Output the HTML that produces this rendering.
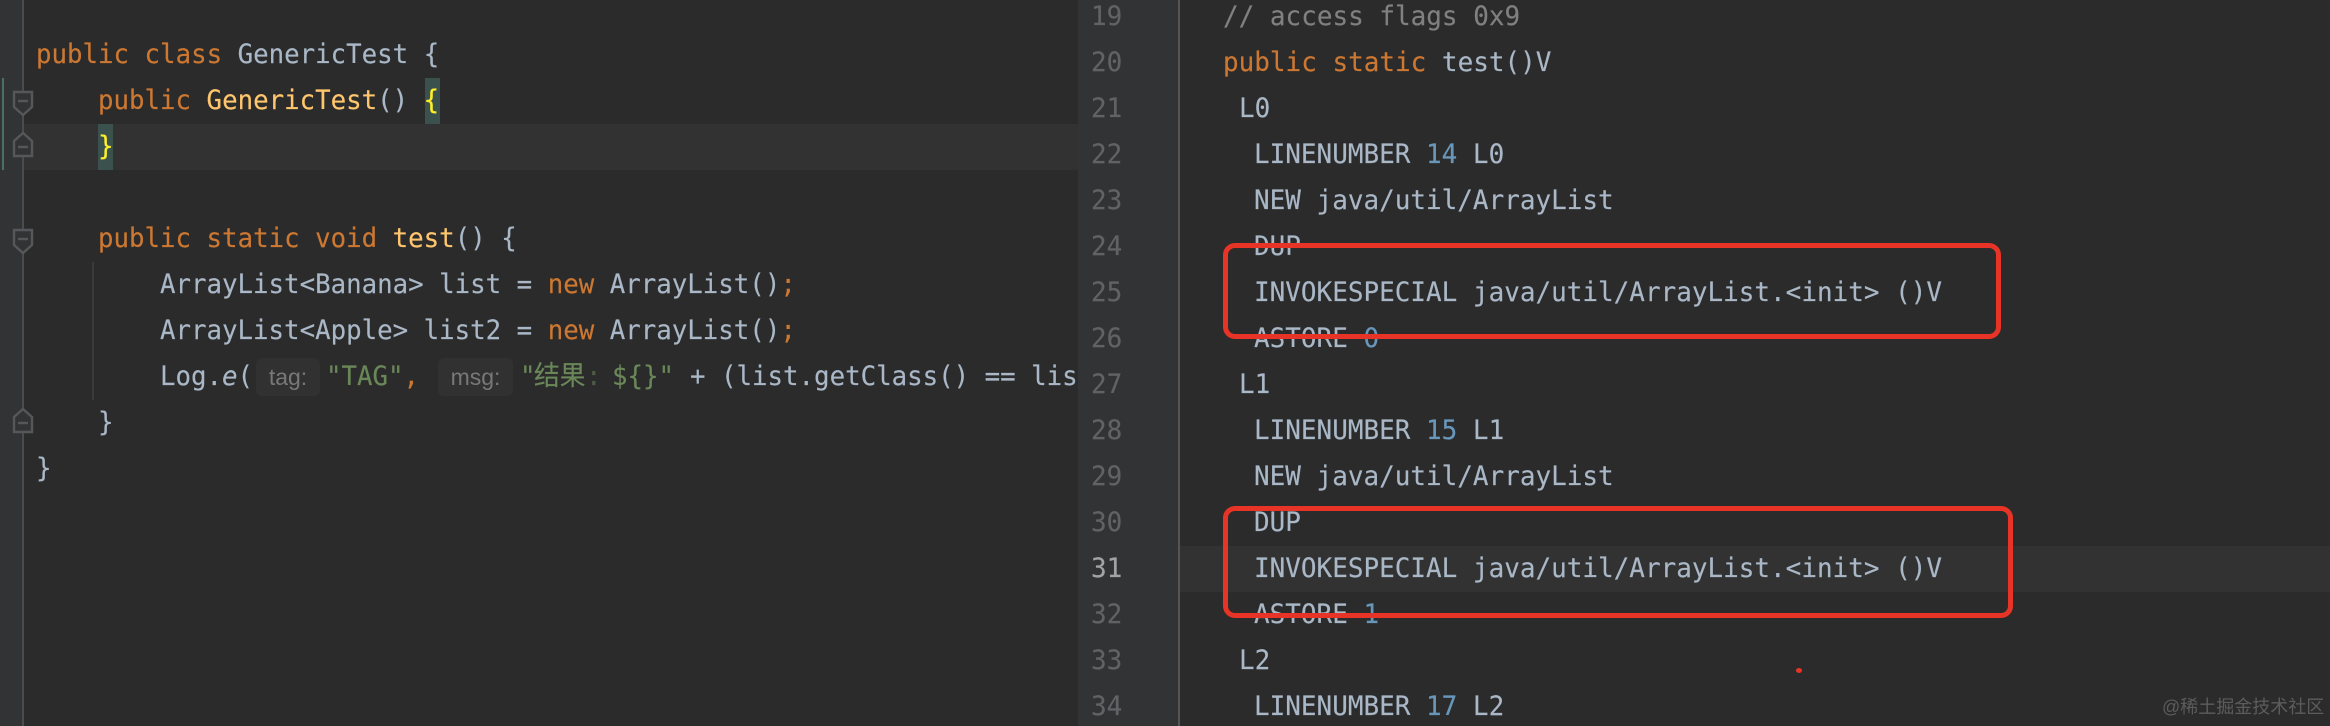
<!DOCTYPE html>
<html lang="zh"><head><meta charset="utf-8"><title>GenericTest</title>
<style>
html,body{margin:0;padding:0;background:#2b2b2b}
#r{position:relative;width:2330px;height:726px;overflow:hidden;background:#2b2b2b}
.b{position:absolute}
.l{position:absolute;height:46px;margin-top:0;white-space:pre;font:27px/46px "DejaVu Sans Mono","Noto Sans CJK SC",monospace;color:#a9b7c6;filter:blur(.35px);transform:scaleX(.962);transform-origin:0 0;-webkit-text-stroke:.15px currentColor}
.a{transform:scaleX(.954)}
.k{color:#cc7832}.m{color:#ffc66d}.s{color:#6a8759}.n{color:#6897bb}.c{color:#808080}.y{color:#ffef28}
.g{color:#606366}
.h{position:absolute;background:#313131;border-radius:6px;color:#787878;font:23px/38px "Liberation Sans",sans-serif;text-align:center}
.red{position:absolute;border:5.5px solid #e83426;border-radius:12px;box-sizing:border-box}
</style></head><body><div id="r">
<div class="b" style="left:0;top:0;width:23px;height:726px;background:#313335"></div>
<div class="b" style="left:24px;top:124px;width:1054px;height:46px;background:#323232"></div>
<div class="b" style="left:22px;top:0;width:2px;height:726px;background:#4a4c4e"></div>
<div class="b" style="left:2px;top:78px;width:2px;height:92px;background:#4d6f69"></div>
<div class="b" style="left:92px;top:262px;width:2px;height:138px;background:#3b3b3b"></div>
<div class="b" style="left:425px;top:78px;width:15px;height:46px;background:#3b514d"></div>
<div class="b" style="left:98px;top:124px;width:15px;height:46px;background:#3b514d"></div>
<div class="b" style="left:1178px;top:0;width:2px;height:726px;background:#555"></div>
<div class="b" style="left:1180px;top:546px;width:1150px;height:46px;background:#323232"></div>

<svg class="b" style="left:0;top:0" width="40" height="460" fill="#313335" stroke="#55575a" stroke-width="2.4">
<path d="M14 92H32V107L23 115 14 107Z"/><path d="M18 101H28"/>
<path d="M14 156H32V141L23 133 14 141Z"/><path d="M18 147H28"/>
<path d="M14 230H32V245L23 253 14 245Z"/><path d="M18 239H28"/>
<path d="M14 432H32V417L23 409 14 417Z"/><path d="M18 423H28"/>
</svg>

<div class="l a" style="left:36px;top:32px"><span class="k">public class </span>GenericTest {</div>
<div class="l a" style="left:98px;top:78px"><span class="k">public </span><span class="m">GenericTest</span>() <span class="y">{</span></div>
<div class="l a" style="left:98px;top:124px"><span class="y">}</span></div>
<div class="l a" style="left:98px;top:216px"><span class="k">public static void </span><span class="m">test</span>() {</div>
<div class="l a" style="left:160px;top:262px">ArrayList&lt;Banana&gt; list = <span class="k">new </span>ArrayList()<span class="k">;</span></div>
<div class="l a" style="left:160px;top:308px">ArrayList&lt;Apple&gt; list2 = <span class="k">new </span>ArrayList()<span class="k">;</span></div>
<div class="l a" style="left:160px;top:354px">Log.<i>e</i>(</div>
<div class="h" style="left:256px;top:358px;width:64px;height:38px">tag:</div>
<div class="l a" style="left:326px;top:354px"><span class="s">"TAG"</span><span class="k">,</span></div>
<div class="h" style="left:438px;top:358px;width:75px;height:38px">msg:</div>
<div class="l a" style="left:520px;top:354px"><span class="s">"</span></div>
<div class="l a" style="left:534px;top:354px"><span class="s">结果</span></div>
<div class="l a" style="left:586px;top:354px"><span style="color:#4c5a46">:</span></div>
<div class="l a" style="left:612px;top:354px"><span class="s">${}"</span></div>
<div class="l a" style="left:690px;top:354px">+ (list.getClass() == lis</div>
<div class="l a" style="left:98px;top:400px">}</div>
<div class="l a" style="left:36px;top:446px">}</div>

<div class="b" style="left:1078px;top:0;width:100px;height:726px;background:#313335"></div>

<div class="l g" style="left:1091px;top:-6px">19</div>
<div class="l g" style="left:1091px;top:40px">20</div>
<div class="l g" style="left:1091px;top:86px">21</div>
<div class="l g" style="left:1091px;top:132px">22</div>
<div class="l g" style="left:1091px;top:178px">23</div>
<div class="l g" style="left:1091px;top:224px">24</div>
<div class="l g" style="left:1091px;top:270px">25</div>
<div class="l g" style="left:1091px;top:316px">26</div>
<div class="l g" style="left:1091px;top:362px">27</div>
<div class="l g" style="left:1091px;top:408px">28</div>
<div class="l g" style="left:1091px;top:454px">29</div>
<div class="l g" style="left:1091px;top:500px">30</div>
<div class="l" style="left:1091px;top:546px;color:#a4a3a3">31</div>
<div class="l g" style="left:1091px;top:592px">32</div>
<div class="l g" style="left:1091px;top:638px">33</div>
<div class="l g" style="left:1091px;top:684px">34</div>

<div class="l" style="left:1223px;top:-6px"><span class="c">// access flags 0x9</span></div>
<div class="l" style="left:1223px;top:40px"><span class="k">public static </span>test()V</div>
<div class="l" style="left:1239px;top:86px">L0</div>
<div class="l" style="left:1254px;top:132px">LINENUMBER <span class="n">14</span> L0</div>
<div class="l" style="left:1254px;top:178px">NEW java/util/ArrayList</div>
<div class="l" style="left:1254px;top:224px">DUP</div>
<div class="l" style="left:1254px;top:270px">INVOKESPECIAL java/util/ArrayList.&lt;init&gt; ()V</div>
<div class="l" style="left:1254px;top:316px">ASTORE <span class="n">0</span></div>
<div class="l" style="left:1239px;top:362px">L1</div>
<div class="l" style="left:1254px;top:408px">LINENUMBER <span class="n">15</span> L1</div>
<div class="l" style="left:1254px;top:454px">NEW java/util/ArrayList</div>
<div class="l" style="left:1254px;top:500px">DUP</div>
<div class="l" style="left:1254px;top:546px">INVOKESPECIAL java/util/ArrayList.&lt;init&gt; ()V</div>
<div class="l" style="left:1254px;top:592px">ASTORE <span class="n">1</span></div>
<div class="l" style="left:1239px;top:638px">L2</div>
<div class="l" style="left:1254px;top:684px">LINENUMBER <span class="n">17</span> L2</div>

<div class="red" style="left:1223px;top:243px;width:778px;height:96px"></div>
<div class="red" style="left:1223px;top:506px;width:790px;height:112px"></div>
<div class="b" style="left:1796px;top:668px;width:6px;height:5px;border-radius:50%;background:#e83426"></div>
<div class="b" style="left:2162px;top:694px;font:18px/26px 'Liberation Sans','Noto Sans CJK SC',sans-serif;color:#5c5c5c;white-space:nowrap">@稀土掘金技术社区</div>
</div></body></html>
